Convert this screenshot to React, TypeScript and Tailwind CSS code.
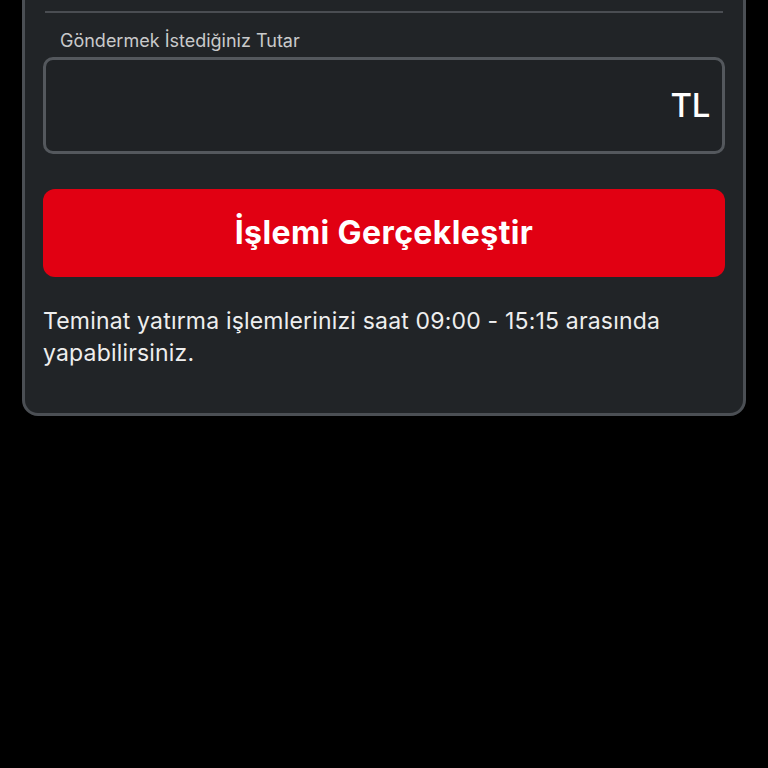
export default function App() {
  return (
    <div className="min-h-[768px] w-full overflow-hidden bg-black font-['Inter','Noto_Sans',sans-serif]">
      <div className="mx-[22px] -mt-[40px] rounded-[16px] border-[3px] border-[#4b4f54] bg-[#212427] px-[18px] pb-[44px] pt-[48px]">
        <div className="mx-[2px] h-[2px] bg-[#4a4d52]" />

        <p className="mt-[17px] pl-[17px] text-[18px] leading-[22px] text-[#c9cacb]">
          Göndermek İstediğiniz Tutar
        </p>

        <div className="mt-[5px] flex h-[97px] items-center justify-end rounded-[10px] border-[3px] border-[#54585d] bg-[#1f2225] px-[12px]">
          <span className="text-[33px] font-medium tracking-[-0.3px] text-white">TL</span>
        </div>

        <button className="mt-[35px] flex h-[88px] w-full items-center justify-center rounded-[12px] bg-[#e10012] text-[32px] font-bold tracking-[0.4px] text-white">
          İşlemi Gerçekleştir
        </button>

        <p className="mt-[28px] text-[23px] leading-[32px] tracking-[0.18px] text-[#eeeeee]">
          Teminat yatırma işlemlerinizi saat 09:00 - 15:15 arasında yapabilirsiniz.
        </p>
      </div>
    </div>
  );
}
